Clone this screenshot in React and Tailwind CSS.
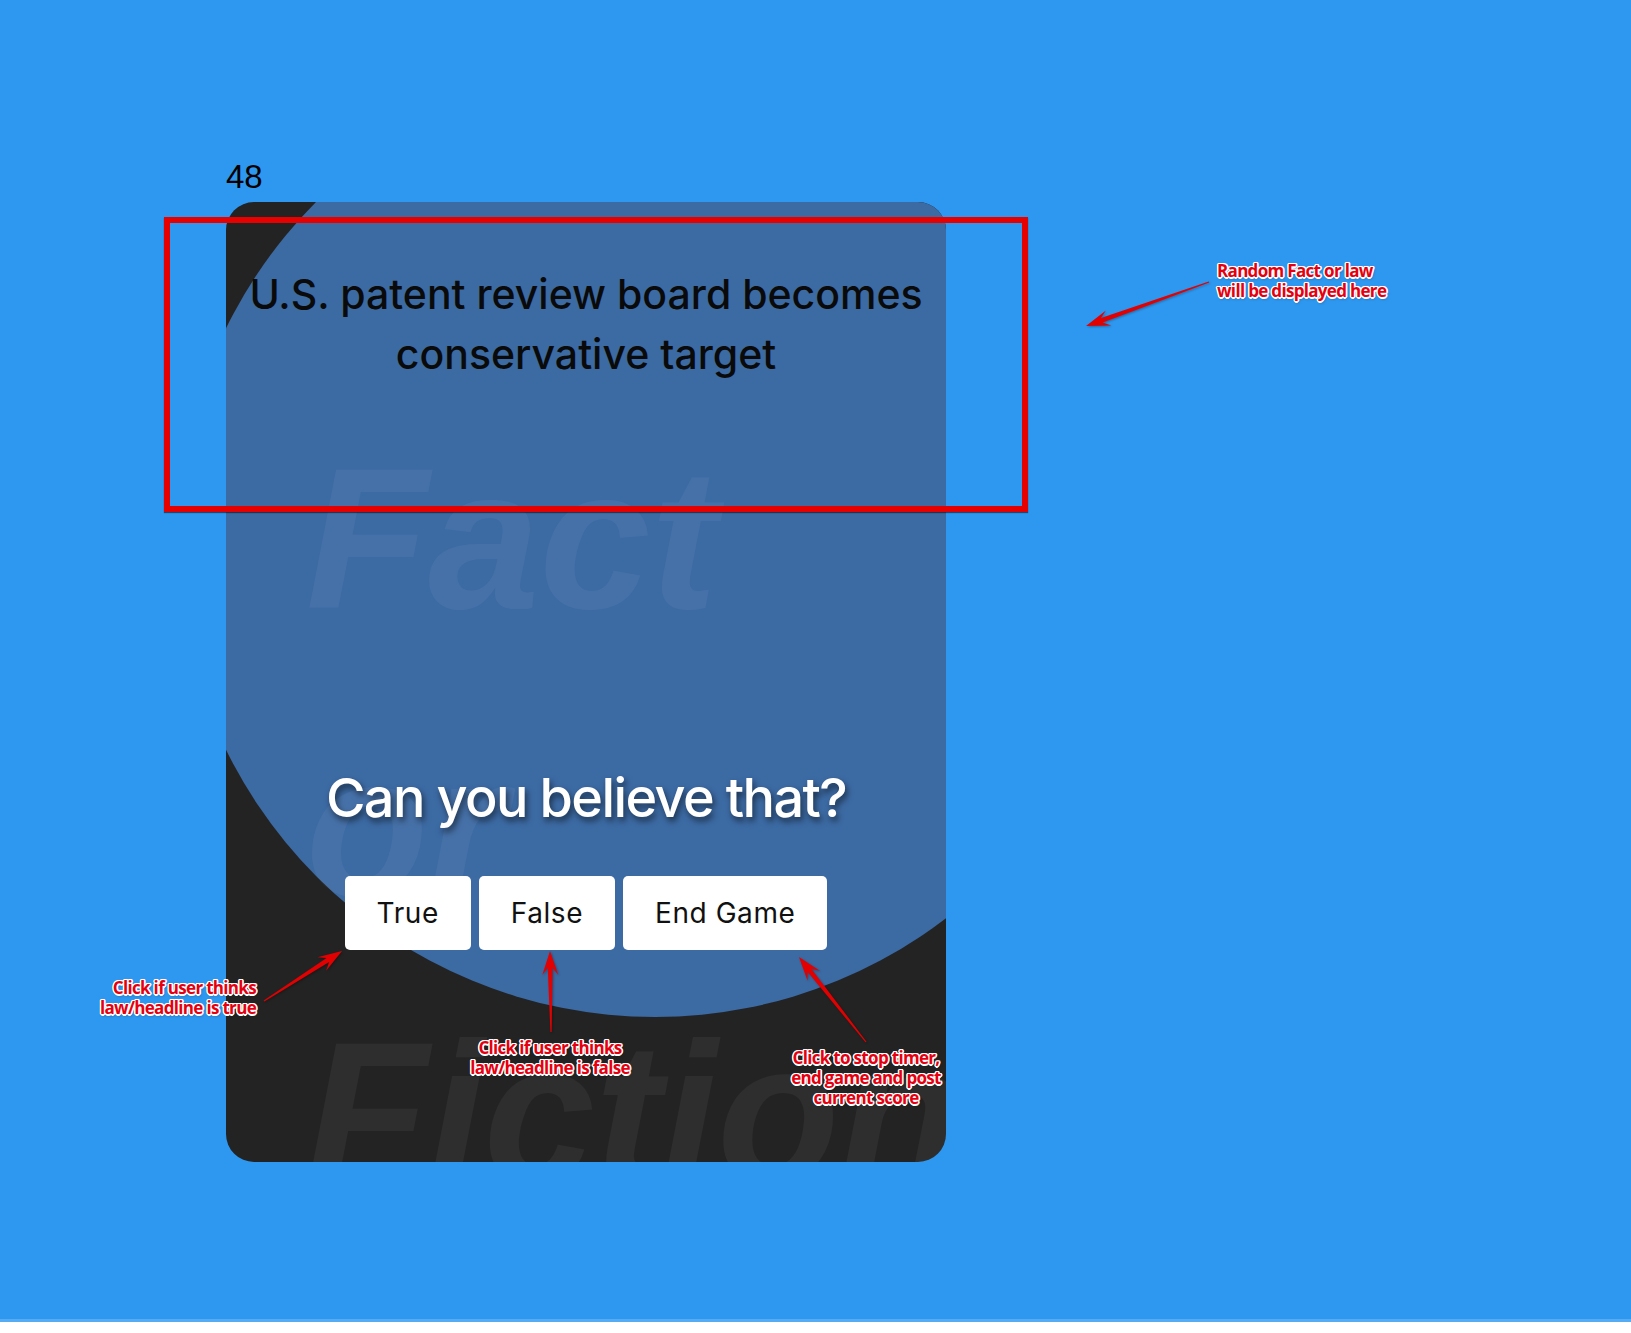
import React from "react";

const buttons = ["True", "False", "End Game"];

// annotation arrows: [tailX, tailY, tipX, tipY]
const arrows = [
  [1209, 282, 1086, 326],
  [264, 1001, 342, 951],
  [551, 1032, 550, 951],
  [866, 1042, 799, 957],
];

function arrowPoints([x1, y1, x2, y2]) {
  const dx = x2 - x1;
  const dy = y2 - y1;
  const len = Math.hypot(dx, dy);
  const ux = dx / len;
  const uy = dy / len;
  const nx = -uy;
  const ny = ux;
  const L = 24;
  const W = 8;
  const p = (bx, by, s, w) => `${bx + nx * w * s},${by + ny * w * s}`;
  const neckX = x2 - ux * L * 0.7;
  const neckY = y2 - uy * L * 0.7;
  const baseX = x2 - ux * L;
  const baseY = y2 - uy * L;
  return [
    p(x1, y1, 1, 0.6),
    p(neckX, neckY, 1, 2.4),
    p(baseX, baseY, 1, W),
    `${x2},${y2}`,
    p(baseX, baseY, -1, W),
    p(neckX, neckY, -1, 2.4),
    p(x1, y1, -1, 0.6),
  ].join(" ");
}

const noteClass =
  "absolute w-[200px] text-[17px] leading-[20px] font-bold tracking-[-0.04em] text-[#e6000f] font-['Open_Sans',sans-serif] [text-shadow:1.5px_0_0_#fff,-1.5px_0_0_#fff,0_1.5px_0_#fff,0_-1.5px_0_#fff,1px_1px_0_#fff,-1px_-1px_0_#fff,1px_-1px_0_#fff,-1px_1px_0_#fff,1px_2px_3px_rgba(0,0,0,0.35)]";

export default function App() {
  return (
    <div className="relative w-full bg-white">
      <div className="h-[1322px] bg-[#2e98f0] border-b-[3px] border-[#55acf3] pt-[153px] pl-[226px]">
        <div className="text-[33px] leading-[48px] text-black font-['Liberation_Sans',sans-serif]">48</div>

        <div className="relative w-[720px] h-[960px] mt-px rounded-[28px] bg-[#232323] overflow-hidden font-['Inter',sans-serif]">
          <div className="absolute left-[-49px] top-[-141px] w-[956px] h-[956px] rounded-full bg-[#3c6aa3]" />
          <div className="absolute left-[80px] top-[193px] text-[200px] leading-[287px] font-bold italic text-white/[0.05] font-['Liberation_Sans',sans-serif] select-none">
            <div>Fact</div>
            <div>or</div>
            <div>Fiction</div>
          </div>

          <div className="relative flex flex-col items-center px-3 pt-[62px]">
            <h2 className="text-[41px] leading-[60px] font-medium text-[#0a0a0a] text-center">
              U.S. patent review board becomes conservative target
            </h2>
            <h1 className="mt-[380px] text-[54px] leading-[67px] font-medium text-white tracking-[-0.03em] [text-shadow:2px_4px_6px_rgba(0,0,0,0.55)]">
              Can you believe that?
            </h1>
            <div className="mt-[45px] flex gap-2">
              {buttons.map((b) => (
                <button key={b} className="bg-white rounded-[5px] px-8 py-4 text-[28px] leading-[42px] tracking-[0.02em] text-[#111]">
                  {b}
                </button>
              ))}
            </div>
          </div>
        </div>
      </div>

      {/* annotations */}
      <div className="absolute left-[164px] top-[217px] w-[864px] h-[295px] border-[6px] border-[#e60000] shadow-[0_1px_1px_rgba(0,0,0,0.5)] pointer-events-none" />
      <svg className="absolute left-0 top-0 w-[1631px] h-[1333px] pointer-events-none">
        {arrows.map((a, i) => (
          <polygon key={i} points={arrowPoints(a)} fill="#e30000" style={{ filter: "drop-shadow(1px 1px 1px rgba(0,0,0,0.3))" }} />
        ))}
      </svg>
      <div className={noteClass + " left-[1217px] top-[261px] text-left"}>
        Random Fact or law
        <br />
        will be displayed here
      </div>
      <div className={noteClass + " left-[56px] top-[978px] text-right"}>
        Click if user thinks
        <br />
        law/headline is true
      </div>
      <div className={noteClass + " left-[450px] top-[1038px] text-center"}>
        Click if user thinks
        <br />
        law/headline is false
      </div>
      <div className={noteClass + " left-[766px] top-[1048px] text-center"}>
        Click to stop timer,
        <br />
        end game and post
        <br />
        current score
      </div>
    </div>
  );
}
